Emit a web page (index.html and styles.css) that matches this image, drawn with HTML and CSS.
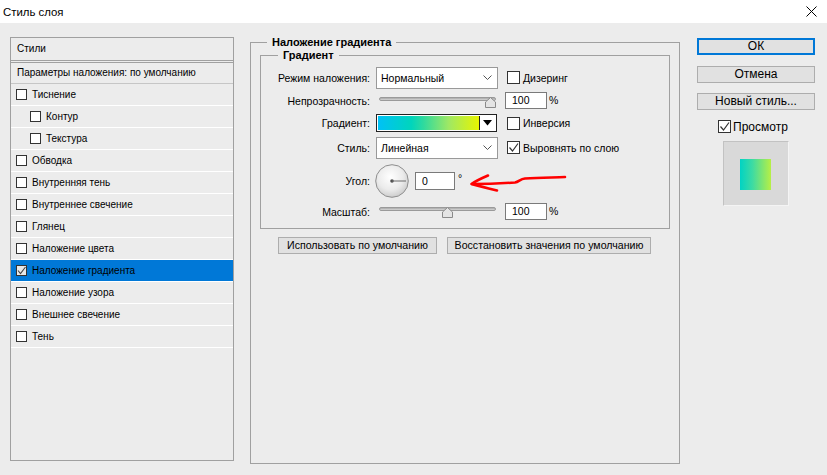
FILE: index.html
```html
<!DOCTYPE html>
<html lang="ru">
<head>
<meta charset="utf-8">
<title>Стиль слоя</title>
<link rel="stylesheet" href="styles.css">
</head>
<body>
<div class="titlebar">
  <span class="title">Стиль слоя</span>
  <svg class="close" width="11" height="11" viewBox="0 0 11 11"><path d="M0.5 0.5 L10.5 10.5 M10.5 0.5 L0.5 10.5" stroke="#000" stroke-width="1"/></svg>
</div>
<div class="main">
  <div class="styles-panel">
    <div class="sp-head">Стили</div>
    <div class="sp-params">Параметры наложения: по умолчанию</div>
    <div class="sp-row"><span class="cb"></span>Тиснение</div>
    <div class="sp-row sub"><span class="cb"></span>Контур</div>
    <div class="sp-row sub"><span class="cb"></span>Текстура</div>
    <div class="sp-row"><span class="cb"></span>Обводка</div>
    <div class="sp-row"><span class="cb"></span>Внутренняя тень</div>
    <div class="sp-row"><span class="cb"></span>Внутреннее свечение</div>
    <div class="sp-row"><span class="cb"></span>Глянец</div>
    <div class="sp-row"><span class="cb"></span>Наложение цвета</div>
    <div class="sp-row sel"><span class="cb"><svg width="9" height="9" viewBox="0 0 9 9"><path d="M1 4.5 L3.5 7.5 L8.5 1" fill="none" stroke="#444" stroke-width="1.1"/></svg></span>Наложение градиента</div>
    <div class="sp-row"><span class="cb"></span>Наложение узора</div>
    <div class="sp-row"><span class="cb"></span>Внешнее свечение</div>
    <div class="sp-row"><span class="cb"></span>Тень</div>
  </div>

  <fieldset class="outer">
    <legend>Наложение градиента</legend>
    <fieldset class="inner">
      <legend>Градиент</legend>
      <div class="form">
        <div class="lbl">Режим наложения:</div>
        <div class="select"><span>Нормальный</span><svg width="9" height="6" viewBox="0 0 9 6"><path d="M0.5 0.5 L4.5 4.5 L8.5 0.5" fill="none" stroke="#555" stroke-width="1"/></svg></div>
        <div class="opt"><span class="cbx"></span>Дизеринг</div>

        <div class="lbl">Непрозрачность:</div>
        <div class="slider s-top"><div class="track"></div><svg class="thumb thumb-max" width="11" height="11" viewBox="0 0 11 11"><path d="M0.5 10.5 L0.5 5 L5.5 0.5 L10.5 5 L10.5 10.5 Z" fill="#e4e4e4" stroke="#8a8a8a"/></svg></div>
        <div class="num"><span class="inp">100</span><span class="unit">%</span></div>

        <div class="lbl">Градиент:</div>
        <div class="grad"><span class="grad-fill"></span><span class="grad-btn"><svg width="9" height="6" viewBox="0 0 9 6"><path d="M0 0 L9 0 L4.5 5.5 Z" fill="#000"/></svg></span></div>
        <div class="opt"><span class="cbx"></span>Инверсия</div>

        <div class="lbl">Стиль:</div>
        <div class="select"><span>Линейная</span><svg width="9" height="6" viewBox="0 0 9 6"><path d="M0.5 0.5 L4.5 4.5 L8.5 0.5" fill="none" stroke="#555" stroke-width="1"/></svg></div>
        <div class="opt"><span class="cbx"><svg width="11" height="11" viewBox="0 0 11 11"><path d="M1.5 5.5 L4.5 9 L10 1.5" fill="none" stroke="#333" stroke-width="1.2"/></svg></span>Выровнять по слою</div>

        <div class="lbl">Угол:</div>
        <div class="angle">
          <svg class="dial" width="34" height="34" viewBox="0 0 34 34"><defs><radialGradient id="dg" cx="45%" cy="38%" r="65%"><stop offset="0" stop-color="#ffffff"/><stop offset="0.6" stop-color="#ebebeb"/><stop offset="1" stop-color="#c9c9c9"/></radialGradient></defs><circle cx="17" cy="17" r="16.3" fill="url(#dg)" stroke="#8e8e8e"/><circle cx="17" cy="17" r="1.8" fill="#505050"/><line x1="17" y1="17" x2="31" y2="17" stroke="#6a6a6a" stroke-width="1"/></svg>
          <span class="inp ang">0</span><span class="deg">°</span>
        </div>
        <div></div>

        <div class="lbl">Масштаб:</div>
        <div class="slider s-bot"><div class="track"></div><svg class="thumb thumb-mid" width="11" height="11" viewBox="0 0 11 11"><path d="M0.5 10.5 L0.5 5 L5.5 0.5 L10.5 5 L10.5 10.5 Z" fill="#e4e4e4" stroke="#8a8a8a"/></svg></div>
        <div class="num"><span class="inp">100</span><span class="unit">%</span></div>
      </div>
    </fieldset>
    <div class="btnrow">
      <button class="btn b1">Использовать по умолчанию</button>
      <button class="btn b2">Восстановить значения по умолчанию</button>
    </div>
  </fieldset>

  <div class="right">
    <button class="rbtn ok">ОК</button>
    <button class="rbtn cancel">Отмена</button>
    <button class="rbtn newst">Новый стиль...</button>
    <div class="preview-chk"><span class="cbx"><svg width="11" height="11" viewBox="0 0 11 11"><path d="M1.5 5.5 L4.5 9 L10 1.5" fill="none" stroke="#333" stroke-width="1.2"/></svg></span>Просмотр</div>
    <div class="preview"><div class="swatch"></div></div>
  </div>
</div>

<svg class="annot" width="110" height="30" viewBox="0 0 110 30">
  <path d="M7 15 C20 15 35 14.5 50 13.5 C54 13 55 10 60 9.5 C75 8.5 90 8.5 100 8" fill="none" stroke="#ff0000" stroke-width="2.6" stroke-linecap="round" stroke-linejoin="round"/>
  <path d="M23 6.5 C16 9.5 10 12.5 6.5 15 C14 17 22 19 32 21.5" fill="none" stroke="#ff0000" stroke-width="2.6" stroke-linecap="round" stroke-linejoin="round"/>
</svg>
</body>
</html>
```

FILE: styles.css
```css
* { box-sizing: border-box; }
html, body { margin: 0; padding: 0; }
body {
  width: 827px;
  height: 475px;
  overflow: hidden;
  position: relative;
  background: #ececec;
  font-family: "Liberation Sans", Arial, sans-serif;
  font-size: 10.5px;
  color: #000;
}

.titlebar {
  height: 23px;
  background: #fff;
  display: flex;
  align-items: center;
  justify-content: space-between;
  padding: 0 10px 0 3px;
}
.title { font-size: 11.4px; }
.close { display: block; }

.main {
  display: flex;
  align-items: flex-start;
  padding: 13px 0 0 10px;
}

/* left styles list */
.styles-panel {
  width: 224px;
  height: 424px;
  margin-top: 1px;
  border: 1px solid #a0a0a0;
  font-size: 10px;
}
.sp-head {
  height: 25px;
  line-height: 22px;
  padding-left: 6px;
  border-bottom: 3px double #a0a0a0;
}
.sp-params {
  height: 21px;
  line-height: 20px;
  padding-left: 6px;
  border-bottom: 1px solid #c6c6c6;
}
.sp-row {
  height: 22px;
  display: flex;
  align-items: center;
  gap: 5px;
  padding-left: 5px;
  border-bottom: 1px solid #fff;
}
.sp-row.sub { padding-left: 19px; }
.sp-row.sel { background: #0078d7; }
.cb {
  width: 11px;
  height: 11px;
  border: 1px solid #333;
  background: #fff;
  display: flex;
  align-items: center;
  justify-content: center;
  flex: none;
}
.sp-row.sel .cb { background: #e8e8e8; }

/* center */
fieldset {
  margin: 0;
  border: 1px solid #a0a0a0;
  min-width: 0;
}
legend {
  font-weight: bold;
  font-size: 11px;
  line-height: 13px;
  padding: 0 5px;
}
.outer {
  width: 430px;
  height: 428px;
  margin-left: 16px;
  padding: 0 9px;
}
.outer > legend { margin-left: 7px; }
.inner {
  width: 410px;
  padding: 4px 0 5px 0;
}
.inner > legend { margin-left: 17px; }

.form {
  display: grid;
  grid-template-columns: 109px 122px 1fr;
  grid-template-rows: 23px 23px 22px 27px 39px 23px;
  column-gap: 6px;
  align-items: center;
}
.lbl { text-align: right; }

.select {
  height: 22px;
  border: 1px solid #999;
  background: #fff;
  display: flex;
  align-items: center;
  justify-content: space-between;
  padding: 0 5px 0 4px;
}
.select svg { display: block; }

.opt {
  display: flex;
  align-items: center;
  gap: 3px;
  margin-left: 3px;
}
.cbx {
  width: 13px;
  height: 13px;
  border: 1px solid #333;
  background: #fff;
  display: flex;
  align-items: center;
  justify-content: center;
  flex: none;
}

.slider {
  position: relative;
  height: 11px;
  align-self: start;
}
.s-top { margin-top: 8px; }
.s-bot { margin-top: 7px; }
.track {
  margin-left: 3px;
  width: 117px;
  height: 4px;
  border: 1px solid #9a9a9a;
  border-radius: 2px;
  background: linear-gradient(#a8a8a8, #d6d6d6);
}
.thumb { position: absolute; top: 0; display: block; }
.thumb-max { left: 109px; }
.thumb-mid { left: 66px; }

.num {
  display: flex;
  align-items: center;
  gap: 2px;
  margin-left: 1px;
}
.inp {
  display: block;
  width: 42px;
  height: 17px;
  line-height: 15px;
  border: 1px solid #7a7a7a;
  background: #fff;
  padding-left: 6px;
}
.unit { margin-top: -2px; }

.grad {
  height: 18px;
  width: 121px;
  border: 1px solid #222;
  background: #fff;
  display: flex;
  padding: 1px;
}
.grad-fill {
  flex: 1;
  background: linear-gradient(to right, #00c1f6 0%, #00d5bc 33%, #2fda9e 45%, #9fe864 70%, #e8f500 100%);
}
.grad-btn {
  width: 16px;
  border-left: 1px solid #222;
  display: flex;
  align-items: center;
  justify-content: center;
}
.grad-btn svg { display: block; }

.angle {
  display: flex;
  align-items: center;
}
.dial { display: block; margin-left: -1px; }
.inp.ang {
  width: 40px;
  height: 18px;
  line-height: 16px;
  margin-left: 6px;
}
.deg { margin-left: 3px; margin-top: -6px; }

.btnrow {
  display: flex;
  gap: 10px;
  margin-top: 8px;
  padding-left: 18px;
}
.btn {
  height: 17px;
  border: 1px solid #adadad;
  background: #e1e1e1;
  font-family: "Liberation Sans", Arial, sans-serif;
  font-size: 10.6px;
  color: #000;
  padding: 0;
  line-height: 15px;
  text-align: center;
}
.b1 { width: 159px; }
.b2 { width: 204px; }

/* right column */
.right {
  width: 118px;
  margin-left: 17px;
  margin-top: 2px;
  display: flex;
  flex-direction: column;
}
.rbtn {
  display: block;
  width: 118px;
  height: 17px;
  border: 1px solid #adadad;
  background: #e1e1e1;
  font-family: "Liberation Sans", Arial, sans-serif;
  font-size: 12px;
  color: #000;
  padding: 0;
  line-height: 15px;
  text-align: center;
}
.rbtn.ok { border: 2px solid #0078d7; line-height: 13px; }
.rbtn.cancel { margin-top: 11px; }
.rbtn.newst { margin-top: 10px; }
.preview-chk {
  display: flex;
  align-items: center;
  gap: 2px;
  margin-top: 10px;
  margin-left: 21px;
  font-size: 12px;
  height: 13px;
}
.preview {
  margin-top: 8px;
  margin-left: 26px;
  width: 66px;
  height: 65px;
  background: #d9d9d9;
  border: 1px solid #c2c2c2;
  border-right-color: #f4f4f4;
  border-bottom-color: #f4f4f4;
  padding: 17px 0 0 16px;
}
.swatch {
  width: 31px;
  height: 31px;
  background: linear-gradient(to right, #00d3c4 0%, #3ddba3 40%, #b7ef45 100%);
}

.annot {
  position: absolute;
  left: 465px;
  top: 169px;
}
```
